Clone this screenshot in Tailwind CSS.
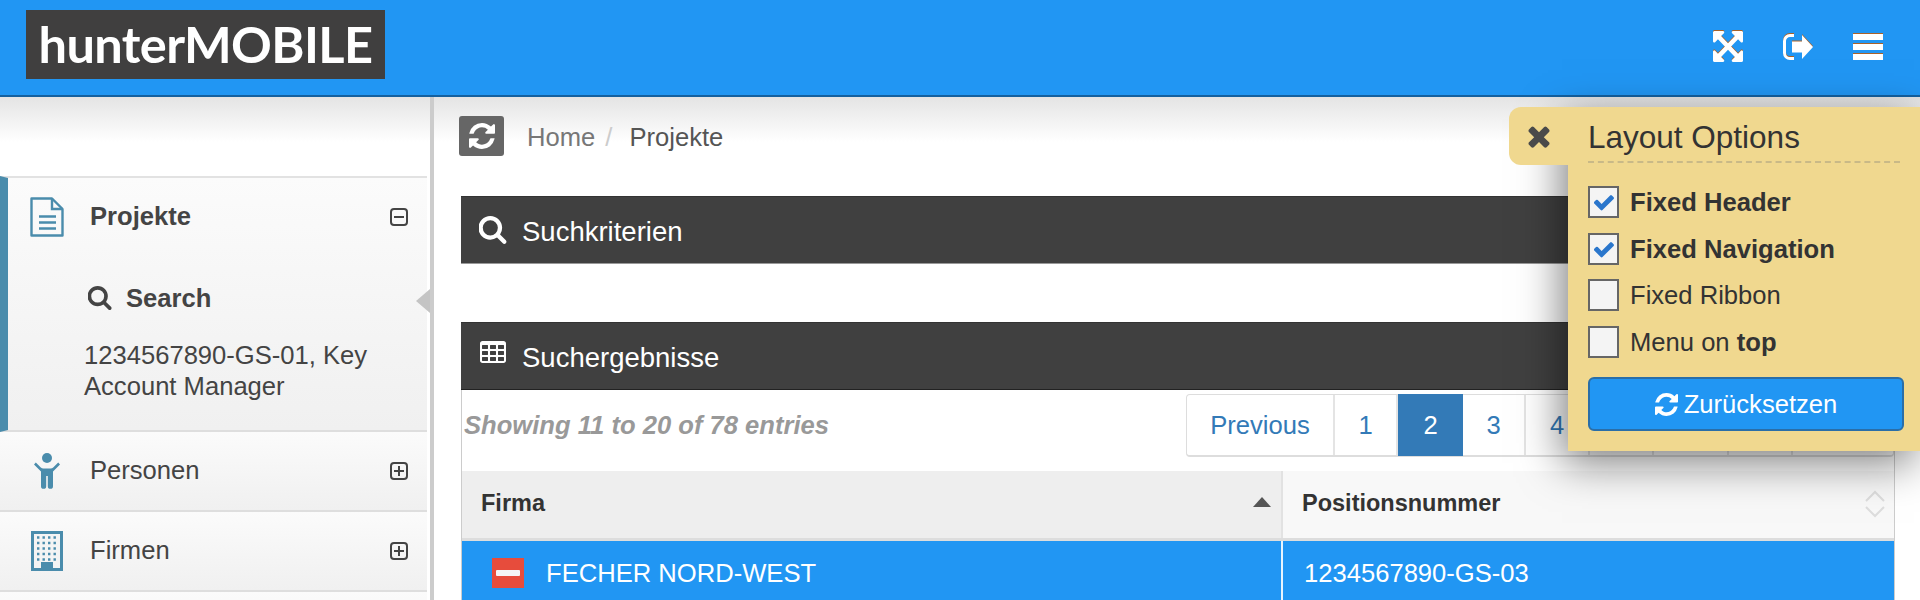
<!DOCTYPE html>
<html lang="de">
<head>
  <meta charset="UTF-8" />
  <title>hunterMOBILE</title>
  <script src="https://cdn.jsdelivr.net/npm/@tailwindcss/browser@4"></script>
</head>
<body class="h-[600px] overflow-hidden bg-white font-['Liberation_Sans',Arial,sans-serif] text-[25.6px] text-[#333]">
  <div class="relative h-[600px] overflow-hidden">
    <!-- Header -->
    <header class="flex h-[97px] items-center justify-between border-b-2 border-[#14609f] bg-[#2196f3] pl-[26px] pr-[37px]">
      <div class="mt-[-7px] flex h-[69px] w-[359px] items-center justify-center bg-[#403f3f] font-['Lato',sans-serif] text-[50.500px] font-bold tracking-[-0.6px] text-white">
        <span class="blur-[0.7px]">hunterMOBILE</span>
      </div>
      <div class="mt-[-2px] flex items-center gap-[40px] text-white drop-shadow-[0_-1px_0_#a8622a]">
        <svg class="h-[31px] w-[30px]" viewBox="128 128 1536 1536" preserveAspectRatio="none" fill="currentColor">
          <path d="M1411 541l-355 355 355 355 144-144q29-31 70-14 39 17 39 59v448q0 26-19 45t-45 19h-448q-42 0-59-40-17-39 14-69l144-144-355-355-355 355 144 144q31 30 14 69-17 40-59 40h-448q-26 0-45-19t-19-45v-448q0-42 40-59 39-17 69 14l144 144 355-355-355-355-144 144q-19 19-45 19-12 0-24-5-40-17-40-59v-448q0-26 19-45t45-19h448q42 0 59 40 17 39-14 69l-144 144 355 355 355-355-144-144q-31-30-14-69 17-40 59-40h448q26 0 45 19t19 45v448q0 42-39 59-13 5-25 5-26 0-45-19z" />
        </svg>
        <svg class="h-[26px] w-[30px]" viewBox="0 0 30 26">
          <path d="M11 1.500H7A5.500 5.500 0 0 0 1.500 7v12A5.500 5.500 0 0 0 7 24.500h4" fill="none" stroke="currentColor" stroke-width="3" />
          <path d="M9 7.500h10V1l11 12-11 12v-6.500H9z" fill="currentColor" />
        </svg>
        <div class="flex w-[30px] flex-col gap-[4px]">
          <div class="h-[6px] bg-white"></div>
          <div class="h-[6px] bg-white"></div>
          <div class="h-[6px] bg-white"></div>
        </div>
      </div>
    </header>

    <div class="flex">
      <!-- Sidebar -->
      <aside class="h-[503px] w-[434px] shrink-0 border-r-4 border-[#cccccc] bg-white">
        <div class="h-[79px] bg-[linear-gradient(#e4e4e4,#ffffff_45px)]"></div>

        <div class="relative mr-[3px] h-[256px] border-y-2 border-t-[#e2e2e2] border-b-[#dedede] border-l-8 border-l-[#4a8cac] bg-[linear-gradient(#fbfbfb,#f0f0f0)] text-[#444]">
          <div class="flex h-[78px] items-center">
            <svg class="ml-[22px] h-[40px] w-[34px] text-[#4a8cac]" viewBox="0 0 34 40" fill="none" stroke="currentColor" stroke-width="2.400">
              <path d="M1.500 1.500H22L32.500 12V38.500H1.500z" stroke-linejoin="round" />
              <path d="M22 1.500V12h10.500" />
              <path d="M9 19.500h17M9 25.500h17M9 31.500h17" stroke-width="2.600" />
            </svg>
            <span class="ml-[26px] mt-[-2px] font-bold">Projekte</span>
            <span class="ml-auto mr-[19px] flex h-[18px] w-[18px] items-center justify-center rounded-[4px] border-2 border-[#444]">
              <span class="h-[2px] w-[10px] bg-[#444]"></span>
            </span>
          </div>
          <div class="mt-[23px] ml-[80px] flex items-center gap-[14px] font-bold">
            <svg class="h-[24px] w-[24px]" viewBox="128 128 1600 1664" fill="#444">
              <path d="M1216 832q0-185-131.500-316.500t-316.500-131.500-316.500 131.500-131.500 316.500 131.500 316.500 316.500 131.500 316.500-131.500 131.500-316.500zm512 832q0 52-38 90t-90 38q-54 0-90-38l-343-342q-179 124-399 124-143 0-273.500-55.500t-225-150-150-225-55.500-273.500 55.500-273.500 150-225 225-150 273.500-55.500 273.500 55.500 225 150 150 225 55.500 273.500q0 220-124 399l343 343q37 37 37 90z" />
            </svg>
            <span>Search</span>
          </div>
          <p class="mt-[23px] ml-[76px] w-[310px] leading-[31px]">1234567890-GS-01, Key Account Manager</p>
          <div class="absolute top-[111px] right-[-3px] h-0 w-0 border-y-[12px] border-r-[14px] border-y-transparent border-r-[#c4c4c4]"></div>
        </div>

        <div class="mr-[3px] flex h-[80px] items-center border-b-2 border-[#dedede] bg-[linear-gradient(#fbfbfb,#f0f0f0)] text-[#444]">
          <svg class="ml-[34px] h-[36px] w-[26px] text-[#4a8cac]" viewBox="0 0 26 36" fill="currentColor">
            <circle cx="13" cy="5" r="5" />
            <path d="M1.800 9.500 0 11.500 7 18.500V33.200a2.600 2.600 0 0 0 5.200 0V23h1.600v10.200a2.600 2.600 0 0 0 5.200 0V18.500l7-7-1.800-2-5 5c-.8.700-1.500 1-2.500 1H9.300c-1 0-1.700-.3-2.500-1z" />
          </svg>
          <span class="ml-[30px] mt-[-2px]">Personen</span>
          <span class="ml-auto mr-[19px] flex h-[18px] w-[18px] items-center justify-center rounded-[4px] border-2 border-[#444]">
            <svg class="h-[10px] w-[10px]" viewBox="0 0 10 10" stroke="#444" stroke-width="2"><path d="M0 5h10M5 0v10" /></svg>
          </span>
        </div>

        <div class="mr-[3px] flex h-[80px] items-center border-b-2 border-[#dedede] bg-[linear-gradient(#fbfbfb,#f0f0f0)] text-[#444]">
          <svg class="ml-[31px] h-[40px] w-[32px]" viewBox="0 0 32 40">
            <path fill="#4a8cac" d="M0 0h32v40H0z" />
            <path fill="#f4f4f4" d="M3 3h26v34h-7v-6H10v6H3z" />
            <path stroke="#4a8cac" stroke-width="2.400" stroke-dasharray="2.400 3.100" d="M6 6.500h21M6 12h21M6 17.500h21M6 23h21M6 28.500h21" />
            <path fill="#4a8cac" d="M10 31h12v6H10z" />
          </svg>
          <span class="ml-[27px] mt-[-2px]">Firmen</span>
          <span class="ml-auto mr-[19px] flex h-[18px] w-[18px] items-center justify-center rounded-[4px] border-2 border-[#444]">
            <svg class="h-[10px] w-[10px]" viewBox="0 0 10 10" stroke="#444" stroke-width="2"><path d="M0 5h10M5 0v10" /></svg>
          </span>
        </div>

        <div class="mr-[3px] h-[80px] bg-[linear-gradient(#fbfbfb,#f0f0f0)]"></div>
      </aside>

      <!-- Main -->
      <main class="min-w-0 flex-1 pl-[27px] pr-[25px] bg-[linear-gradient(#e4e4e4,#ffffff_45px)] bg-no-repeat">
        <div class="flex h-[99px] items-start pt-[19px]">
          <button class="-ml-[2px] flex h-[40px] w-[45px] items-center justify-center rounded-[3px] bg-[#666666]">
            <svg class="h-[26px] w-[26px]" viewBox="128 128 1536 1536" fill="#ffffff">
              <path d="M1639 1056q0 5-1 7-64 268-268 434.500t-478 166.500q-146 0-282.500-55t-243.500-157l-129 129q-19 19-45 19t-45-19-19-45v-448q0-26 19-45t45-19h448q26 0 45 19t19 45-19 45l-137 137q71 66 161 102t187 36q134 0 250-65t186-179q11-17 53-117 8-23 30-23h192q13 0 22.500 9.500t9.500 22.500zm25-800v448q0 26-19 45t-45 19h-448q-26 0-45-19t-19-45 19-45l138-138q-148-137-349-137-134 0-250 65t-186 179q-11 17-53 117-8 23-30 23h-199q-13 0-22.500-9.500t-9.500-22.500v-7q65-268 270-434.500t480-166.500q146 0 284 55.500t245 156.500l130-129q19-19 45-19t45 19 19 45z" />
            </svg>
          </button>
          <nav class="ml-[23px] mt-[2px] flex items-center text-[#777777]">
            <span>Home</span>
            <span class="ml-[10px] text-[#cccccc]">/</span>
            <span class="ml-[17px] text-[#555555]">Projekte</span>
          </nav>
        </div>

        <section class="flex h-[68px] items-center gap-[15px] border-t border-[#333333] border-b border-b-[#999999] bg-[#404040] pl-[18px] text-[27.500px] text-white">
          <svg class="h-[28px] w-[28px]" viewBox="128 128 1600 1664" fill="#ffffff">
            <path d="M1216 832q0-185-131.500-316.500t-316.500-131.500-316.500 131.500-131.500 316.500 131.500 316.500 316.500 131.500 316.500-131.500 131.500-316.500zm512 832q0 52-38 90t-90 38q-54 0-90-38l-343-342q-179 124-399 124-143 0-273.500-55.500t-225-150-150-225-55.500-273.500 55.500-273.500 150-225 225-150 273.500-55.500 273.500 55.500 225 150 150 225 55.500 273.500q0 220-124 399l343 343q37 37 37 90z" />
          </svg>
          <span class="mt-[3px]">Suchkriterien</span>
        </section>

        <section class="mt-[58px] flex h-[68px] items-center gap-[15px] border-t border-[#333333] border-b border-b-[#222222] bg-[#404040] pl-[18px] text-[27.500px] text-white">
          <svg class="mt-[-6px] h-[28px] w-[28px]" viewBox="0 128 1792 1536" fill="#ffffff">
            <path d="M576 1376v-192q0-14-9-23t-23-9h-320q-14 0-23 9t-9 23v192q0 14 9 23t23 9h320q14 0 23-9t9-23zm0-384v-192q0-14-9-23t-23-9h-320q-14 0-23 9t-9 23v192q0 14 9 23t23 9h320q14 0 23-9t9-23zm512 384v-192q0-14-9-23t-23-9h-320q-14 0-23 9t-9 23v192q0 14 9 23t23 9h320q14 0 23-9t9-23zm-512-768v-192q0-14-9-23t-23-9h-320q-14 0-23 9t-9 23v192q0 14 9 23t23 9h320q14 0 23-9t9-23zm512 384v-192q0-14-9-23t-23-9h-320q-14 0-23 9t-9 23v192q0 14 9 23t23 9h320q14 0 23-9t9-23zm512 384v-192q0-14-9-23t-23-9h-320q-14 0-23 9t-9 23v192q0 14 9 23t23 9h320q14 0 23-9t9-23zm-512-768v-192q0-14-9-23t-23-9h-320q-14 0-23 9t-9 23v192q0 14 9 23t23 9h320q14 0 23-9t9-23zm512 384v-192q0-14-9-23t-23-9h-320q-14 0-23 9t-9 23v192q0 14 9 23t23 9h320q14 0 23-9t9-23zm0-384v-192q0-14-9-23t-23-9h-320q-14 0-23 9t-9 23v192q0 14 9 23t23 9h320q14 0 23-9t9-23zm128-320v1088q0 66-47 113t-113 47h-1344q-66 0-113-47t-47-113v-1088q0-66 47-113t113-47h1344q66 0 113 47t47 113z" />
          </svg>
          <span class="mt-[3px]">Suchergebnisse</span>
        </section>

        <div class="border-x border-[#cccccc]">
          <div class="flex h-[81px] items-start justify-between pt-[4px]">
            <span class="mt-[12px] ml-[2px] font-bold italic text-[#999999]">Showing 11 to 20 of 78 entries</span>
            <div class="flex h-[63px] rounded-[4px] border border-b-2 border-[#dddddd] text-[#337ab7]">
              <span class="flex w-[148px] items-center justify-center border-r-2 border-[#e4e4e4]">Previous</span>
              <span class="flex w-[63px] items-center justify-center border-r-2 border-[#e4e4e4]">1</span>
              <span class="-my-px flex w-[65px] items-center justify-center bg-[#337ab7] text-white">2</span>
              <span class="flex w-[63px] items-center justify-center border-r-2 border-[#e4e4e4]">3</span>
              <span class="flex w-[64px] items-center justify-center border-r-2 border-[#e4e4e4]">4</span>
              <span class="w-[64px] border-r-2 border-[#e4e4e4]"></span>
              <span class="w-[75px] border-r-2 border-[#e4e4e4]"></span>
              <span class="w-[64px] border-r-2 border-[#e4e4e4]"></span>
              <span class="w-[100px]"></span>
            </div>
          </div>
          <table class="w-full table-fixed border-collapse text-left">
            <thead>
              <tr class="h-[68px] border-b-[3px] border-[#dddddd]">
                <th class="relative w-[820px] border-r-2 border-[#e2e2e2] bg-[#eeeeee] pb-[2px] pl-[19px] text-[23.500px] font-bold">
                  Firma
                  <span class="absolute top-[26px] right-[10px] h-0 w-0 border-x-[9px] border-b-[10px] border-x-transparent border-b-[#555555]"></span>
                </th>
                <th class="relative bg-[#f8f8f8] pb-[2px] pl-[19px] text-[23.500px] font-bold">
                  Positionsnummer
                  <svg class="absolute top-[19px] right-[9px] h-[28px] w-[20px]" viewBox="0 0 20 28" fill="none" stroke="#dddddd" stroke-width="2"><path d="M1 11 10 2l9 9M1 17l9 9 9-9" /></svg>
                </th>
              </tr>
            </thead>
            <tbody>
              <tr class="h-[66px] bg-[#2196f3] text-white">
                <td class="border-r-2 border-[#e8f4fe] pl-[30px]">
                  <div class="flex items-center gap-[22px]">
                    <span class="flex h-[30px] w-[32px] items-center justify-center bg-[#e74c3c]"><span class="h-[6px] w-[24px] rounded-[1px] bg-[#f5f5f5]"></span></span>
                    <span>FECHER NORD-WEST</span>
                  </div>
                </td>
                <td class="pl-[21px]">1234567890-GS-03</td>
              </tr>
            </tbody>
          </table>
        </div>
      </main>
    </div>

    <!-- Layout options overlay -->
    <div class="absolute top-[107px] right-0 h-[344px] w-[352px] bg-[#f0d88f] px-[20px] pt-[13px] shadow-[-6px_12px_40px_rgba(0,0,0,0.5)]">
      <div class="absolute top-0 left-[-59px] flex h-[58px] w-[60px] items-center rounded-l-[12px] bg-[#f0d88f] pl-[18px]">
        <svg class="h-[24px] w-[24px]" viewBox="218 218 1356 1356" fill="#4a4a4a">
          <path d="M1490 1322q0 40-28 68l-136 136q-28 28-68 28t-68-28l-294-294-294 294q-28 28-68 28t-68-28l-136-136q-28-28-28-68t28-68l294-294-294-294q-28-28-28-68t28-68l136-136q28-28 68-28t68 28l294 294 294-294q28-28 68-28t68 28l136 136q28 28 28 68t-28 68l-294 294 294 294q28 28 28 68z" />
        </svg>
      </div>
      <h3 class="h-[43px] border-b-2 border-dashed border-[#c9b987] text-[31.500px] leading-[34px] text-[#333]">Layout Options</h3>

      <div class="mt-[23px] flex h-[32px] items-center gap-[11px] font-bold">
        <span class="flex h-[32px] w-[31px] items-center justify-center border-2 border-[#666666] bg-[#f4f4f4]">
          <svg class="h-[20px] w-[20px]" viewBox="128 256 1543 1232" fill="#2a76cc"><path d="M1671 566q0 40-28 68l-724 724-136 136q-28 28-68 28t-68-28l-136-136-362-362q-28-28-28-68t28-68l136-136q28-28 68-28t68 28l294 295 656-657q28-28 68-28t68 28l136 136q28 28 28 68z" /></svg>
        </span>
        Fixed Header
      </div>
      <div class="mt-[15px] flex h-[32px] items-center gap-[11px] font-bold">
        <span class="flex h-[32px] w-[31px] items-center justify-center border-2 border-[#666666] bg-[#f4f4f4]">
          <svg class="h-[20px] w-[20px]" viewBox="128 256 1543 1232" fill="#2a76cc"><path d="M1671 566q0 40-28 68l-724 724-136 136q-28 28-68 28t-68-28l-136-136-362-362q-28-28-28-68t28-68l136-136q28-28 68-28t68 28l294 295 656-657q28-28 68-28t68 28l136 136q28 28 28 68z" /></svg>
        </span>
        Fixed Navigation
      </div>
      <div class="mt-[14px] flex h-[32px] items-center gap-[11px]">
        <span class="h-[32px] w-[31px] border-2 border-[#666666] bg-[#f4f4f4]"></span>
        Fixed Ribbon
      </div>
      <div class="mt-[15px] flex h-[32px] items-center gap-[11px]">
        <span class="h-[32px] w-[31px] border-2 border-[#666666] bg-[#f4f4f4]"></span>
        <span>Menu on <b>top</b></span>
      </div>

      <button class="mt-[19px] flex h-[54px] w-[316px] items-center justify-center gap-[6px] rounded-[6px] border-2 border-[#2a6ea8] bg-[#2196f3] text-white">
        <svg class="h-[23px] w-[23px]" viewBox="128 128 1536 1536" fill="#ffffff">
          <path d="M1639 1056q0 5-1 7-64 268-268 434.500t-478 166.500q-146 0-282.500-55t-243.500-157l-129 129q-19 19-45 19t-45-19-19-45v-448q0-26 19-45t45-19h448q26 0 45 19t19 45-19 45l-137 137q71 66 161 102t187 36q134 0 250-65t186-179q11-17 53-117 8-23 30-23h192q13 0 22.500 9.500t9.500 22.500zm25-800v448q0 26-19 45t-45 19h-448q-26 0-45-19t-19-45 19-45l138-138q-148-137-349-137-134 0-250 65t-186 179q-11 17-53 117-8 23-30 23h-199q-13 0-22.500-9.500t-9.500-22.500v-7q65-268 270-434.500t480-166.500q146 0 284 55.500t245 156.500l130-129q19-19 45-19t45 19 19 45z" />
        </svg>
        Zurücksetzen
      </button>
    </div>
  </div>
</body>
</html>
